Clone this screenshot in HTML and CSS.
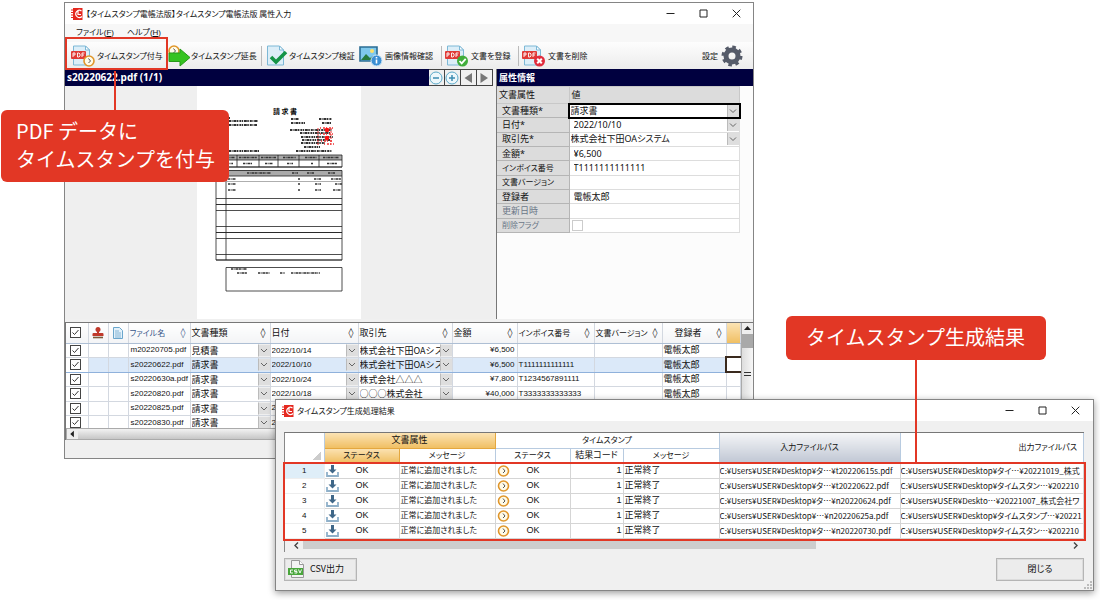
FILE: index.html
```html
<!DOCTYPE html>
<html lang="ja">
<head>
<meta charset="utf-8">
<title>タイムスタンプ電帳法版</title>
<link rel="stylesheet" href="styles.css">
</head>
<body>
<svg class="sprite" aria-hidden="true">
  <symbol id="app" viewBox="0 0 12 14"><path d="M2 1h9.5v12H2z" fill="#e5281f"/><path d="M0 3h3M0 5.500h3M0 8h3M0 10.500h3" stroke="#e5281f"/><path d="M10.500 4A3.600 3.600 0 1 0 11 9.500M7 4v3.500h3" fill="none" stroke="#fff" stroke-width="1.200"/></symbol>
  <symbol id="min" viewBox="0 0 9 9"><path d="M.5 4.500h8" stroke="#222"/></symbol>
  <symbol id="max" viewBox="0 0 9 9"><path d="M1 1h7v7H1z" fill="none" stroke="#222"/></symbol>
  <symbol id="close" viewBox="0 0 9 9"><path d="M.7.7l7.600 7.600M8.300.7L.7 8.300" stroke="#222"/></symbol>
  <symbol id="sheet" viewBox="0 0 24 22"><path d="M2.500 1h12l4 4v15h-16z" fill="#dceef8" stroke="#7db8d6"/><path d="M14.500 1v4h4z" fill="#fff" stroke="#7db8d6"/></symbol>
  <symbol id="pdf" viewBox="0 0 24 22"><use href="#sheet"/><rect x="0" y="6" width="15" height="8" rx="1" fill="#e03a36"/><path d="M2 12V8h2v2H2M6.500 8h1.500l1 1v2l-1 1H6.500zM11 12V8h2.500M11 10h2" fill="none" stroke="#fff" stroke-width=".9"/></symbol>
  <symbol id="clock" viewBox="0 0 12 12"><circle cx="6" cy="6" r="5" fill="#fffbe8" stroke="#e0962a" stroke-width="1.600"/><path d="M5.500 3.500L7.500 6l-2 2" fill="none" stroke="#555" stroke-width="1"/></symbol>
  <symbol id="save" viewBox="0 0 13 12"><path d="M1 7v4h11V7" fill="none" stroke="#8fb0c9" stroke-width="1.800"/><path d="M6.500 0v5" stroke="#3f6788" stroke-width="3"/><path d="M2.500 4.500h8l-4 4z" fill="#3f6788"/></symbol>
</svg>

<main class="stage">
  <section class="window main-window">
    <header class="titlebar">
      <svg class="app-icon"><use href="#app"/></svg>
      <h1>【タイムスタンプ電帳法版】タイムスタンプ電帳法版 属性入力</h1>
      <div class="win-buttons">
        <button aria-label="最小化"><svg><use href="#min"/></svg></button>
        <button aria-label="最大化"><svg><use href="#max"/></svg></button>
        <button aria-label="閉じる"><svg><use href="#close"/></svg></button>
      </div>
    </header>
    <nav class="menubar"><button>ファイル(<u>F</u>)</button><button>ヘルプ(<u>H</u>)</button></nav>
    <div class="toolbar">
      <button class="tool tool-add"><svg viewBox="0 0 24 22"><use href="#pdf"/><use href="#clock" x="12" y="10" width="12" height="12"/></svg>タイムスタンプ付与</button>
      <button class="tool tool-extend"><svg viewBox="0 0 24 22"><use href="#clock" x="1" y="0" width="12" height="12"/><path d="M2 8h11V4l10 8.500L13 21v-4.500H2z" fill="#35c321" stroke="#279b1a"/></svg>タイムスタンプ延長</button>
      <i class="divider"></i>
      <button class="tool tool-verify"><svg viewBox="0 0 24 22"><use href="#sheet"/><path d="M6 12l5 5L21 7" fill="none" stroke="#159447" stroke-width="3.600"/></svg>タイムスタンプ検証</button>
      <button class="tool tool-image"><svg viewBox="0 0 24 22"><path d="M1 2h17v14H1z" fill="#7fc8ec" stroke="#2b6d94" stroke-width="1.600"/><path d="M2 15l5-6 4 4 3-2 3 4z" fill="#277a3d"/><circle cx="13" cy="6" r="2" fill="#ffe169"/><circle cx="17.500" cy="15.500" r="5.500" fill="#3c8fd3" stroke="#d5eaf7"/><path d="M17.500 12v1.500M17.500 14.500v4" stroke="#fff" stroke-width="1.600"/></svg>画像情報確認</button>
      <i class="divider"></i>
      <button class="tool tool-doc"><svg viewBox="0 0 24 22"><use href="#pdf"/><circle cx="17.500" cy="16" r="5.500" fill="#41ad3b"/><path d="M14.500 16l2.200 2.300 4-4.500" fill="none" stroke="#fff" stroke-width="1.800"/></svg>文書を登録</button>
      <i class="divider"></i>
      <button class="tool tool-doc"><svg viewBox="0 0 24 22"><use href="#pdf"/><circle cx="17.500" cy="16" r="5.500" fill="#e12c3d"/><path d="M15.200 13.700l4.600 4.600M19.800 13.700l-4.600 4.600" stroke="#fff" stroke-width="2"/></svg>文書を削除</button>
      <button class="tool tool-settings">設定<svg viewBox="0 0 22 22"><circle cx="11" cy="11" r="9" fill="none" stroke="#555b69" stroke-width="3" stroke-dasharray="3.534 3.534"/><circle cx="11" cy="11" r="6" fill="none" stroke="#555b69" stroke-width="5"/></svg></button>
      <div class="mark mark-tool"></div>
    </div>

    <div class="workspace">
      <section class="preview">
        <div class="pane-title">
          <h2>s20220622.pdf (1/1)</h2>
          <button aria-label="縮小"><svg viewBox="0 0 14 14"><circle cx="7" cy="7" r="6" fill="#edf7fb" stroke="#5aa9c9"/><path d="M4 7h6" stroke="#3c8db2" stroke-width="1.500"/></svg></button>
          <button aria-label="拡大"><svg viewBox="0 0 14 14"><circle cx="7" cy="7" r="6" fill="#edf7fb" stroke="#5aa9c9"/><path d="M4 7h6M7 4v6" stroke="#3c8db2" stroke-width="1.500"/></svg></button>
          <button aria-label="前へ"><svg viewBox="0 0 14 14"><path d="M11 2v10L3.500 7z" fill="#777"/></svg></button>
          <button aria-label="次へ"><svg viewBox="0 0 14 14"><path d="M3.500 2v10L11 7z" fill="#777"/></svg></button>
        </div>
        <div class="canvas">
          <svg class="page" viewBox="0 0 164 233" role="img" aria-label="請求書">
            <rect width="164" height="233" fill="#fff"/>
            <text x="88" y="28" text-anchor="middle" class="page-title">請 求 書</text>
            <g fill="none" stroke="#333" stroke-width="1.800" stroke-dasharray="2 .6 1 .8 3 .5 1.500 1">
              <path d="M24 32h9M32 35h29M32 39h28M94 33h8M94 37h14M122 33h13M125 37h9M93 44h42M103 47h30M104 51h32M105 54h28M104 57h24M107 61h16M32 65h30M99 65h36"/>
            </g>
            <path d="M121 42v17M134 42v17" stroke="#e33" stroke-dasharray="2 1"/>
            <path d="M123 42h13M123 48h13M124 55h12M127 58h10" stroke="#e33" stroke-width="1.500" stroke-dasharray="1 2 2 1"/>
            <circle cx="130" cy="44" r="2.300" fill="#f11"/><circle cx="130" cy="52" r="2.300" fill="#f11"/>
            <path d="M19 69h126v5H19zM19 84h126v6H19z" fill="#aaa"/>
            <g fill="none" stroke="#222" stroke-width=".8">
              <path d="M19 69h126v12H19zM19 74h126M40 69v12M62 69v12M81 69v12M102 69v12M122 69v12M19 84.500h126v89.500H19zM19 90h126M29 90v84M19 112.500h126M19 118.500h126M19 124.500h126M19 140.500h126M19 146.500h126M19 152.500h126M19 168.500h126M29 181.500h116v23.500H29z"/>
              <path d="M19 95.500h126" stroke="#999"/>
              <path d="M19 81h126M19 118.500h126M19 146.500h126M19 174h126"/>
            </g>
            <g fill="none" stroke="#333" stroke-width="1.600" stroke-dasharray="2 .6 1 .8 3 .5">
              <path d="M22 71.500h16M42 71.500h18M64 71.500h15M86 71.500h13M108 71.500h12M126 71.500h16M22 77.500h14M46 77.500h9M68 77.500h8M90 77.500h6M114 77.500h2M130 77.500h10M50 87h24M95 87h6M110 87h7M131 87h7M31 93h8M31 98h8M31 104h8M101 93h2M117 93h7M134 93h10M101 98h2M118 98h6M138 98h7M101 104h2M118 104h6M136 104h8M34 183h16M40 187h10M61 187h12M83 187h5M94 187h29"/>
            </g>
          </svg>
        </div>
      </section>

      <section class="props">
        <div class="pane-title"><h2>属性情報</h2></div>
        <table class="prop-table">
          <thead><tr><th>文書属性</th><th>値</th></tr></thead>
          <tbody>
            <tr class="current"><th><label for="p1">文書種類*</label></th><td><select id="p1"><option>請求書</option></select></td></tr>
            <tr><th><label for="p2">日付*</label></th><td><select id="p2" class="inset"><option>2022/10/10</option></select></td></tr>
            <tr><th><label for="p3">取引先*</label></th><td><select id="p3"><option>株式会社下田OAシステム</option></select></td></tr>
            <tr><th><label for="p4">金額*</label></th><td><input id="p4" type="text" value="¥6,500"></td></tr>
            <tr><th class="small"><label for="p5">インボイス番号</label></th><td><input id="p5" type="text" value="T1111111111111"></td></tr>
            <tr><th class="small"><label for="p6">文書バージョン</label></th><td><input id="p6" type="text" value=""></td></tr>
            <tr><th><label for="p7">登録者</label></th><td><input id="p7" type="text" value="電帳太郎"></td></tr>
            <tr class="muted"><th><label for="p8">更新日時</label></th><td><input id="p8" type="text" value="" disabled></td></tr>
            <tr class="muted"><th class="small"><label for="p9">削除フラグ</label></th><td><input id="p9" type="checkbox" disabled></td></tr>
          </tbody>
        </table>
      </section>
    </div>

    <div class="list">
      <div class="list-view">
        <table class="file-table">
          <colgroup><col class="c-check"><col class="c-icon"><col class="c-icon"><col class="c-name"><col class="c-type"><col class="c-date"><col class="c-client"><col class="c-amount"><col class="c-invoice"><col class="c-version"><col class="c-user"><col></colgroup>
          <thead><tr>
            <th><input type="checkbox" checked aria-label="すべて選択"></th>
            <th><svg class="mini" viewBox="0 0 12 12"><circle cx="6" cy="2.500" r="2.500" fill="#c0392b"/><path d="M5 4h2v2h3.500q1 0 1 1v2H.5V7q0-1 1-1H5z" fill="#c0392b"/><path d="M1 10.500h10" stroke="#7c5a3a" stroke-width="1.600"/></svg></th>
            <th><svg class="mini" viewBox="0 0 12 12"><path d="M1.500.5h6l3 3v8h-9z" fill="#e3f1fa" stroke="#6aa6cc"/><path d="M3 4h4M3 6h6M3 8h6M3 10h6" stroke="#6aa6cc" stroke-width=".8"/></svg></th>
            <th class="blue small"><span>ファイル名<i>◊</i></span></th><th><span>文書種類<i>◊</i></span></th><th><span>日付<i>◊</i></span></th><th><span>取引先<i>◊</i></span></th><th><span>金額<i>◊</i></span></th><th class="small"><span>インボイス番号<i>◊</i></span></th><th class="small"><span>文書バージョン<i>◊</i></span></th><th class="centered"><span>登録者<i>◊</i></span></th><th class="gold"></th>
          </tr></thead>
          <tbody>
            <tr><td><input type="checkbox" checked aria-label="m20220705.pdf"></td><td></td><td></td><td>m20220705.pdf</td><td><select aria-label="文書種類"><option>見積書</option></select></td><td><select class="num" aria-label="日付"><option>2022/10/14</option></select></td><td><select aria-label="取引先"><option>株式会社下田OAシステム</option></select></td><td class="amount">¥6,500</td><td></td><td></td><td class="cjk">電帳太郎</td><td></td></tr>
            <tr class="selected"><td><input type="checkbox" checked aria-label="s20220622.pdf"></td><td></td><td></td><td>s20220622.pdf</td><td><select aria-label="文書種類"><option>請求書</option></select></td><td><select class="num" aria-label="日付"><option>2022/10/10</option></select></td><td><select aria-label="取引先"><option>株式会社下田OAシステム</option></select></td><td class="amount">¥6,500</td><td>T1111111111111</td><td></td><td class="cjk">電帳太郎</td><td class="focus"></td></tr>
            <tr><td><input type="checkbox" checked aria-label="s20220630a.pdf"></td><td></td><td></td><td>s20220630a.pdf</td><td><select aria-label="文書種類"><option>請求書</option></select></td><td><select class="num" aria-label="日付"><option>2022/10/24</option></select></td><td><select aria-label="取引先"><option>株式会社△△△</option></select></td><td class="amount">¥7,800</td><td>T1234567891111</td><td></td><td class="cjk">電帳太郎</td><td></td></tr>
            <tr><td><input type="checkbox" checked aria-label="s20220820.pdf"></td><td></td><td></td><td>s20220820.pdf</td><td><select aria-label="文書種類"><option>請求書</option></select></td><td><select class="num" aria-label="日付"><option>2022/10/18</option></select></td><td><select aria-label="取引先"><option>○○○株式会社</option></select></td><td class="amount">¥40,000</td><td>T3333333333333</td><td></td><td class="cjk">電帳太郎</td><td></td></tr>
            <tr><td><input type="checkbox" checked aria-label="s20220825.pdf"></td><td></td><td></td><td>s20220825.pdf</td><td><select aria-label="文書種類"><option>請求書</option></select></td><td>2</td><td></td><td></td><td></td><td></td><td></td><td></td></tr>
            <tr><td><input type="checkbox" checked aria-label="s20220830.pdf"></td><td></td><td></td><td>s20220830.pdf</td><td><select aria-label="文書種類"><option>請求書</option></select></td><td>2</td><td></td><td></td><td></td><td></td><td></td><td></td></tr>
          </tbody>
        </table>
        <div class="vscroll"><svg viewBox="0 0 11 11"><path d="M2 7l3.500-4L9 7z" fill="#222"/></svg><b></b><i></i></div>
      </div>
      <div class="hscroll-classic"><svg viewBox="0 0 11 11"><path d="M7 2v7L3 5.500z" fill="#222"/></svg></div>
    </div>
    <footer class="status"></footer>
  </section>

  <section class="window dialog">
    <header class="titlebar">
      <svg class="app-icon"><use href="#app"/></svg>
      <h1>タイムスタンプ生成処理結果</h1>
      <div class="win-buttons">
        <button aria-label="最小化"><svg><use href="#min"/></svg></button>
        <button aria-label="最大化"><svg><use href="#max"/></svg></button>
        <button aria-label="閉じる"><svg><use href="#close"/></svg></button>
      </div>
    </header>
    <div class="dialog-body">
      <div class="results">
        <table class="result-table">
          <colgroup><col class="r-no"><col class="r-status"><col class="r-msg"><col class="r-status"><col class="r-code"><col class="r-msg"><col class="r-path"><col></colgroup>
          <thead>
            <tr><th rowspan="2" class="corner"></th><th colspan="2" class="gold">文書属性</th><th colspan="3" class="small">タイムスタンプ</th><th rowspan="2" class="steel small">入力ファイルパス</th><th rowspan="2" class="out small">出力ファイルパス</th></tr>
            <tr><th class="gold small">ステータス</th><th class="small">メッセージ</th><th class="small">ステータス</th><th>結果コード</th><th class="small">メッセージ</th></tr>
          </thead>
          <tbody>
            <tr><th class="active">1</th><td class="ok"><svg><use href="#save"/></svg>OK</td><td class="small">正常に追加されました</td><td class="ok"><svg><use href="#clock"/></svg>OK</td><td class="code">1</td><td>正常終了</td><td class="path">C:¥Users¥USER¥Desktop¥タ…¥t20220615s.pdf</td><td class="path">C:¥Users¥USER¥Desktop¥タイ…¥20221019_株式</td></tr>
            <tr><th>2</th><td class="ok"><svg><use href="#save"/></svg>OK</td><td class="small">正常に追加されました</td><td class="ok"><svg><use href="#clock"/></svg>OK</td><td class="code">1</td><td>正常終了</td><td class="path">C:¥Users¥USER¥Desktop¥タ…¥t20220622.pdf</td><td class="path">C:¥Users¥USER¥Desktop¥タイムスタン…¥202210</td></tr>
            <tr><th>3</th><td class="ok"><svg><use href="#save"/></svg>OK</td><td class="small">正常に追加されました</td><td class="ok"><svg><use href="#clock"/></svg>OK</td><td class="code">1</td><td>正常終了</td><td class="path">C:¥Users¥USER¥Desktop¥タ…¥n20220624.pdf</td><td class="path">C:¥Users¥USER¥Deskto…¥20221007_株式会社ワ</td></tr>
            <tr><th>4</th><td class="ok"><svg><use href="#save"/></svg>OK</td><td class="small">正常に追加されました</td><td class="ok"><svg><use href="#clock"/></svg>OK</td><td class="code">1</td><td>正常終了</td><td class="path">C:¥Users¥USER¥Desktop¥…¥n20220625a.pdf</td><td class="path">C:¥Users¥USER¥Desktop¥タイムスタンプ…¥20221</td></tr>
            <tr><th>5</th><td class="ok"><svg><use href="#save"/></svg>OK</td><td class="small">正常に追加されました</td><td class="ok"><svg><use href="#clock"/></svg>OK</td><td class="code">1</td><td>正常終了</td><td class="path">C:¥Users¥USER¥Desktop¥タ…¥n20220730.pdf</td><td class="path">C:¥Users¥USER¥Desktop¥タイムスタン…¥202210</td></tr>
          </tbody>
        </table>
        <div class="hscroll"><svg viewBox="0 0 9 9"><path d="M6 1.500L3 4.500l3 3" fill="none" stroke="#444" stroke-width="1.400"/></svg><div class="track"><b></b></div><svg viewBox="0 0 9 9"><path d="M3 1.500l3 3-3 3" fill="none" stroke="#444" stroke-width="1.400"/></svg></div>
        <div class="mark mark-rows"></div>
      </div>
      <div class="actions">
        <button class="push csv"><svg viewBox="0 0 17 18"><path d="M3.500.5h8l4 4v13h-12z" fill="#f3f3f3" stroke="#999"/><path d="M11.500.5v4h4" fill="#fff" stroke="#999"/><rect y="8" width="15" height="7" fill="#4aa63c"/><path d="M5 10H2.500v3H5M9 10H6.500v1.500H9V13H6.500M10.500 9.500L12 13l1.500-3.500" fill="none" stroke="#fff" stroke-width=".9"/></svg>CSV出力</button>
        <button class="push shut">閉じる</button>
      </div>
      <svg class="grip" viewBox="0 0 8 8" fill="#bbb"><path d="M6 0h2v2H6zM3 3h2v2H3zM6 3h2v2H6zM0 6h2v2H0zM3 6h2v2H3zM6 6h2v2H6z"/></svg>
    </div>
  </section>

  <p class="callout callout-add">PDF データに<br>タイムスタンプを付与</p>
  <p class="callout callout-result">タイムスタンプ生成結果</p>
</main>
</body>
</html>
```
FILE: styles.css
```css
:root {
  --red: #e23725;
  --navy: #00003f;
  --line: #c9ced6;
  --gold: linear-gradient(#fbe3b4, #f0bf63);
  --chevron: url("data:image/svg+xml,%3Csvg xmlns='http://www.w3.org/2000/svg' viewBox='0 0 12 12'%3E%3Cpath d='M0 0h12v12H0z' fill='%23dedede'/%3E%3Cpath d='M.5 0v12' stroke='%23bbb'/%3E%3Cpath d='M3 4.500l3 3 3-3' fill='none' stroke='%23666'/%3E%3C/svg%3E");
}
* { box-sizing: border-box; }
body {
  margin: 0;
  background: #fff;
  color: #111;
  font: 9px/12px "Liberation Sans", "Noto Sans CJK JP", sans-serif;
  font-feature-settings: "palt";
}
h1, h2, p { margin: 0; font-size: inherit; font-weight: 400; }
i { font-style: normal; }
button, input, select { margin: 0; padding: 0; border: 0; background: none; color: inherit; font: inherit; font-feature-settings: inherit; }
table { border-collapse: collapse; table-layout: fixed; width: 100%; }
th, td { padding: 0; font-weight: 400; text-align: left; white-space: nowrap; overflow: hidden; }
.sprite { display: block; width: 0; height: 0; }

.stage { position: relative; min-height: 600px; padding: 2px 346px 0 64px; overflow: hidden; }
.window { background: #f0f0f0; border: 1px solid #858585; }
.titlebar { display: flex; align-items: center; gap: 3px; height: 21px; padding: 0 12px 0 6px; background: #fff; }
.titlebar h1 { font-family: "Noto Sans CJK JP", sans-serif; font-size: 8px; white-space: nowrap; }
.app-icon { width: 12px; height: 14px; }
.win-buttons { display: flex; gap: 24px; margin-left: auto; }
.win-buttons button, .win-buttons svg { display: block; width: 9px; height: 9px; }

.menubar { display: flex; gap: 13px; height: 18px; padding-left: 11px; background: #f7f7f7; font-size: 8px; }
.toolbar { position: relative; display: flex; align-items: center; height: 27px; padding: 0 9px 0 6px; background: linear-gradient(#fdfdfd, #ececec); }
.tool { display: flex; align-items: center; gap: 2px; flex: none; font-family: "Noto Sans CJK JP", sans-serif; font-size: 8px; white-space: nowrap; }
.tool svg { width: 24px; height: 22px; flex: none; }
.tool-add { width: 96px; }
.tool-extend { width: 94px; gap: 0; }
.tool-verify { width: 94px; gap: 0; }
.tool-image { width: 82px; }
.tool-doc { width: 73px; }
.tool-settings { margin-left: auto; }
.divider { width: 1px; height: 20px; margin-right: 3px; background: #bbb; flex: none; }

.workspace { display: grid; grid-template-columns: minmax(0, 1fr) 257px; column-gap: 3px; }
.pane-title { display: flex; height: 17px; background: var(--navy); color: #fff; }
.pane-title h2 { flex: 1; padding-left: 2px; font: 700 10px/17px "Noto Sans", "Noto Sans CJK JP", sans-serif; }
.pane-title button { width: 16px; background: #f0f0f0; border: 1px solid #444; border-width: 1px 1px 1px 0; }
.pane-title button svg { display: block; width: 14px; height: 14px; }
.props .pane-title h2 { font-size: 9px; }
.canvas { display: flex; padding-left: 132px; background: #efefef; }
.page { display: block; width: 164px; height: 233px; }
.page-title { font: 700 7px "Noto Sans CJK JP", sans-serif; }

.props { background: #fcfcfc; border-left: 1px solid #777; }
.prop-table { width: 243px; height: 147px; border-top: 1px solid #888; font-family: "Noto Sans", "Noto Sans CJK JP", sans-serif; line-height: 12px; }
.prop-table th { width: 72px; padding-left: 5px; background: #dcdcdc; border: 1px solid #b5b5b5; border-left: 0; }
.prop-table thead th { height: 17px; padding-left: 2px; border-color: #c8c8c8; }
.prop-table thead th + th { width: auto; }
.prop-table td { height: 14px; background: #fff; border: 1px solid #ddd; }
.prop-table select, .prop-table input[type="text"] { display: block; width: 100%; height: 12px; line-height: 12px; }
.prop-table input[type="text"], .prop-table .inset { padding-left: 4px; }
.prop-table select { padding-left: 1px; }
.prop-table .current td { outline: 2px solid #000; outline-offset: -1px; }
.muted { color: #6b7787; }
select { appearance: none; background: var(--chevron) right center / 12px 100% no-repeat; }
input[type="checkbox"] { appearance: none; display: block; width: 11px; height: 11px; background: #fff; border: 1px solid #444; }
input[type="checkbox"]:checked { background: url("data:image/svg+xml,%3Csvg xmlns='http://www.w3.org/2000/svg' viewBox='0 0 9 9'%3E%3Cpath d='M1.500 4.500l2 2 4-4.500' fill='none' stroke='%23333'/%3E%3C/svg%3E") #fff; }
input[type="checkbox"]:disabled { margin-left: 2px; border-color: #ccc; }

.list { margin-top: 3px; border-top: 1px solid #777; border-left: 1px solid #777; background: #fff; }
.list-view { display: flex; height: 105px; overflow: hidden; }
.file-table { flex: 1; width: auto; align-self: flex-start; font-size: 8px; }
.c-check { width: 22px; }
.c-icon { width: 20px; }
.c-name { width: 62px; }
.c-type { width: 80px; }
.c-date { width: 88px; }
.c-client { width: 94px; }
.c-amount { width: 65px; }
.c-invoice { width: 77px; }
.c-version { width: 68px; }
.c-user { width: 64px; }
.file-table th, .file-table td { border-right: 1px solid #d3d8e0; border-bottom: 1px solid #d3d8e0; }
.file-table th { height: 20px; padding: 0 1px; border-bottom-color: #aebfd4; background: linear-gradient(#fff, #f3f4f6); font-family: "Noto Sans CJK JP", sans-serif; font-size: 9px; }
.file-table th span { display: flex; justify-content: space-between; }
.file-table th i { font-family: "DejaVu Sans", sans-serif; font-size: 10px; padding-right: 3px; }
.file-table .blue { color: #38578a; }
.file-table .centered span { padding-left: 11px; }
.file-table td { height: 14px; padding-left: 1px; line-height: 12px; }
.file-table tr:nth-child(even) td { height: 15px; }
.file-table td:nth-child(4) { padding-left: 2px; }
.file-table .amount { padding-right: 2px; text-align: right; }
.file-table .cjk { font-family: "Noto Sans CJK JP", sans-serif; font-size: 9px; }
.file-table select { display: block; width: 100%; height: 13px; padding: 0 12px 0 0; font: 9px/13px "Noto Sans CJK JP", sans-serif; }
.file-table .num { font: 8px/13px "Liberation Sans", sans-serif; }
.file-table input { margin-left: 3px; }
.file-table .selected td { background: #dbe9f9; border-top: 1px solid #8fb1db; border-bottom: 1px solid #8fb1db; }
.file-table .selected td:first-child { background: #fff; }
.file-table .selected .focus { background: #fff; border: 2px solid #3a2a1e; border-right: 0; }
.gold, .file-table th.gold, .result-table th.gold { background: var(--gold); }
.small, .file-table th.small { font-size: 8px; }
.mini { display: block; width: 12px; height: 12px; margin: 0 auto; }
.vscroll { width: 12px; background: linear-gradient(90deg, #ddd, #f7f7f7); border-left: 1px solid #aaa; }
.vscroll svg { display: block; width: 11px; height: 11px; background: #eee; }
.vscroll b { display: block; height: 14px; background: #a9a9a9; }
.vscroll i { display: block; width: 7px; height: 4px; margin: 24px 2px 0; border: 1px solid #333; border-width: 1px 0; }
.hscroll-classic { height: 12px; background: linear-gradient(#f2f2f2, #c6c6c6); border: 1px solid #aaa; }
.hscroll-classic svg { display: block; width: 11px; height: 10px; background: #eee; }
.status { height: 18px; background: #f0f0f0; }

.dialog { position: absolute; top: 399px; left: 25%; right: 6px; box-shadow: 0 2px 7px #0006; }
.dialog .titlebar { padding: 0 13px 0 6px; }
.dialog-body { position: relative; padding: 11px 9px 9px 8px; }
.results { position: relative; border-top: 1px solid #777; border-left: 1px solid #888; background: #fff; }
.result-table { font-family: "Liberation Sans", "Noto Sans CJK JP", sans-serif; }
.r-no { width: 39px; }
.r-status { width: 75px; }
.r-msg { width: 96px; }
.r-code { width: 53px; }
.r-path { width: 181px; }
.result-table th { height: 15px; border-right: 1px solid #b8cbe0; border-bottom: 1px solid #b8cbe0; background: #fff; text-align: center; line-height: 13px; }
.result-table .gold { border-color: #e4a73f; }
.result-table .steel { background: linear-gradient(#f4f5f7, #bfc6d3); }
.result-table .out { padding-right: 6px; text-align: right; }
.result-table .corner { background: linear-gradient(135deg, #0000 50%, #ccc 50%) right 3px bottom 3px / 8px 8px no-repeat #fff; }
.result-table tbody th { border-color: #eee; font-size: 8px; }
.result-table tbody .active { background: #dfeef8; }
.result-table td { height: 15px; padding-left: 1px; border-right: 1px solid #d5d5d5; border-bottom: 1px solid #d5d5d5; line-height: 13px; }
.result-table .ok { padding-right: 13px; text-align: center; }
.result-table .ok svg { float: left; width: 13px; height: 12px; margin-top: 1px; }
.result-table .code { padding-right: 1px; text-align: right; }
.result-table .path { padding-left: 0; font-family: "Noto Sans CJK JP", sans-serif; font-size: 8px; }
.hscroll { display: flex; align-items: center; height: 13px; padding: 0 4px 0 7px; background: #f0f0f0; }
.hscroll svg { width: 9px; height: 9px; }
.track { flex: 1; padding: 0 2px; }
.track b { display: block; width: 67%; height: 8px; background: #cdcdcd; }
.actions { display: flex; justify-content: space-between; margin-top: 6px; }
.push { display: flex; align-items: center; justify-content: center; gap: 5px; height: 23px; border: 1px solid #b5b5b5; background: #ececec; box-shadow: inset 0 0 0 1px #dcdcdc; font-family: "Noto Sans CJK JP", sans-serif; }
.csv { width: 73px; justify-content: flex-start; padding-left: 3px; }
.csv svg { width: 17px; height: 18px; }
.shut { width: 88px; }
.grip { position: absolute; right: 1px; bottom: 1px; width: 8px; height: 8px; }

.mark { position: absolute; border: 2px solid var(--red); }
.mark-tool { top: -5px; left: 0; width: 103px; height: 33px; }
.mark-rows { top: 29px; left: -2px; right: -2px; height: 79px; }
.callout { position: absolute; border-radius: 6px; background: var(--red); color: #fff; font: 400 20px/28px "Noto Sans CJK JP", sans-serif; font-feature-settings: normal; white-space: nowrap; }
.callout::before { content: ""; position: absolute; width: 2px; background: var(--red); }
.callout-add { top: 110px; left: 1px; padding: 7px 14px 9px 15px; }
.callout-add::before { left: 113px; bottom: 100%; height: 39px; }
.callout-result { top: 316px; right: 54px; padding: 7px 21px 9px 20px; }
.callout-result::before { left: calc(50% - 1px); top: 100%; height: 102px; }
```
